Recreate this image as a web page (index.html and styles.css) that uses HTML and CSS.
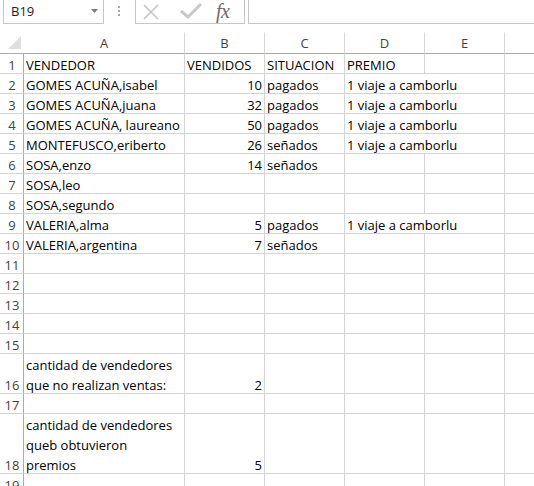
FILE: index.html
```html
<!DOCTYPE html>
<html lang="es">
<head>
<meta charset="utf-8">
<link rel="stylesheet" href="styles.css">
</head>
<body>
<div class="toolbar">
  <div class="namebox">
    <span class="name">B19</span>
    <svg class="arrow" width="7" height="4" viewBox="0 0 7 4"><polygon points="0,0 7,0 3.5,4" fill="#7a7a7a"/></svg>
  </div>
  <div class="dots"><i></i><i></i><i></i></div>
  <div class="fbuttons">
    <svg class="ic-x" width="16" height="16" viewBox="0 0 16 16"><path d="M1 1 L15 15 M15 1 L1 15" stroke="#c4c4c4" stroke-width="1.6" fill="none"/></svg>
    <svg class="ic-ok" width="22" height="16" viewBox="0 0 22 16"><path d="M1 8 L8 14 L21 1" stroke="#c8c8c8" stroke-width="3" fill="none"/></svg>
    <span class="fx">fx</span>
  </div>
  <div class="fbar"></div>
</div>

<div class="sheet">
  <div class="corner"><svg width="13" height="13" viewBox="0 0 13 13"><polygon points="13,0 13,13 0,13" fill="#dfdfdf"/></svg></div>
  <div class="ch">A</div><div class="ch">B</div><div class="ch">C</div><div class="ch">D</div><div class="ch">E</div><div class="ch last"></div>

  <div class="rh">1</div><div class="c">VENDEDOR</div><div class="c">VENDIDOS</div><div class="c">SITUACION</div><div class="c">PREMIO</div><div class="c"></div><div class="c last"></div>
  <div class="rh">2</div><div class="c">GOMES ACUÑA,isabel</div><div class="c n">10</div><div class="c">pagados</div><div class="c ov">1 viaje a camborlu</div><div class="c"></div><div class="c last"></div>
  <div class="rh">3</div><div class="c">GOMES ACUÑA,juana</div><div class="c n">32</div><div class="c">pagados</div><div class="c ov">1 viaje a camborlu</div><div class="c"></div><div class="c last"></div>
  <div class="rh">4</div><div class="c">GOMES ACUÑA, laureano</div><div class="c n">50</div><div class="c">pagados</div><div class="c ov">1 viaje a camborlu</div><div class="c"></div><div class="c last"></div>
  <div class="rh">5</div><div class="c">MONTEFUSCO,eriberto</div><div class="c n">26</div><div class="c">señados</div><div class="c ov">1 viaje a camborlu</div><div class="c"></div><div class="c last"></div>
  <div class="rh">6</div><div class="c">SOSA,enzo</div><div class="c n">14</div><div class="c">señados</div><div class="c"></div><div class="c"></div><div class="c last"></div>
  <div class="rh">7</div><div class="c">SOSA,leo</div><div class="c"></div><div class="c"></div><div class="c"></div><div class="c"></div><div class="c last"></div>
  <div class="rh">8</div><div class="c">SOSA,segundo</div><div class="c"></div><div class="c"></div><div class="c"></div><div class="c"></div><div class="c last"></div>
  <div class="rh">9</div><div class="c">VALERIA,alma</div><div class="c n">5</div><div class="c">pagados</div><div class="c ov">1 viaje a camborlu</div><div class="c"></div><div class="c last"></div>
  <div class="rh">10</div><div class="c">VALERIA,argentina</div><div class="c n">7</div><div class="c">señados</div><div class="c"></div><div class="c"></div><div class="c last"></div>
  <div class="rh">11</div><div class="c"></div><div class="c"></div><div class="c"></div><div class="c"></div><div class="c"></div><div class="c last"></div>
  <div class="rh">12</div><div class="c"></div><div class="c"></div><div class="c"></div><div class="c"></div><div class="c"></div><div class="c last"></div>
  <div class="rh">13</div><div class="c"></div><div class="c"></div><div class="c"></div><div class="c"></div><div class="c"></div><div class="c last"></div>
  <div class="rh">14</div><div class="c"></div><div class="c"></div><div class="c"></div><div class="c"></div><div class="c"></div><div class="c last"></div>
  <div class="rh">15</div><div class="c"></div><div class="c"></div><div class="c"></div><div class="c"></div><div class="c"></div><div class="c last"></div>
  <div class="rh">16</div><div class="c wrap"><div class="lines">cantidad de vendedores<br>que no realizan ventas:</div></div><div class="c n">2</div><div class="c"></div><div class="c"></div><div class="c"></div><div class="c last"></div>
  <div class="rh">17</div><div class="c"></div><div class="c"></div><div class="c"></div><div class="c"></div><div class="c"></div><div class="c last"></div>
  <div class="rh">18</div><div class="c wrap"><div class="lines">cantidad de vendedores<br>queb obtuvieron<br>premios</div></div><div class="c n">5</div><div class="c"></div><div class="c"></div><div class="c"></div><div class="c last"></div>
  <div class="rh">19</div><div class="c"></div><div class="c"></div><div class="c"></div><div class="c"></div><div class="c"></div><div class="c last"></div>
</div>
</body>
</html>
```
FILE: styles.css
```css
html, body {
  margin: 0;
  padding: 0;
  background: #ffffff;
  overflow: hidden;
}
body {
  width: 534px;
  height: 486px;
  font-family: "Open Sans", "Liberation Sans", sans-serif;
  font-size: 13px;
  color: #000;
}

/* ---------- toolbar ---------- */
.toolbar {
  display: flex;
  align-items: flex-start;
  height: 24px;
}
.namebox {
  box-sizing: border-box;
  margin-left: 3px;
  width: 101px;
  height: 24px;
  border: 1px solid #c6c6c6;
  border-top: none;
  display: flex;
  align-items: center;
  justify-content: space-between;
  padding: 0 5px 1px 7px;
  color: #222;
}
.name {
  line-height: 18px;
}
.arrow {
  display: block;
  margin-top: -1px;
}
.dots {
  width: 2px;
  margin: 6px 0 0 14px;
  display: flex;
  flex-direction: column;
  gap: 2px;
}
.dots i {
  display: block;
  width: 2px;
  height: 2px;
  background: #a8a8a8;
}
.fbuttons {
  box-sizing: border-box;
  margin-left: 15px;
  width: 110px;
  height: 24px;
  border: 1px solid #c6c6c6;
  border-top: none;
  display: flex;
  align-items: center;
  padding: 0 0 1px 7px;
}
.ic-x { display: block; margin-top: 1px; flex: none; }
.ic-ok { display: block; margin-left: 21px; flex: none; }
.fx {
  margin-left: 14px;
  font-family: "Liberation Serif", "DejaVu Serif", serif;
  font-style: italic;
  font-size: 20px;
  line-height: 22px;
  height: 22px;
  color: #6a6a6a;
  letter-spacing: -0.5px;
  padding-top: 0;
}
.fbar {
  flex: 1;
  box-sizing: border-box;
  margin-left: 3px;
  height: 24px;
  border-left: 1px solid #c6c6c6;
  border-bottom: 1px solid #c6c6c6;
}

/* ---------- sheet ---------- */
.sheet {
  margin-top: 8px;
  display: grid;
  grid-template-columns: 24px 161px 80px 80px 80px 80px 30px;
  grid-template-rows: 22px repeat(15, 20px) 40px 20px 60px 20px;
}
.sheet > div {
  box-sizing: border-box;
  min-width: 0;
}
.corner {
  border-bottom: 1px solid #ababab;
  display: flex;
  align-items: flex-end;
  justify-content: flex-end;
  padding: 0 3px 4px 0;
}
.corner svg { display: block; }
.ch {
  border-bottom: 1px solid #ababab;
  border-right: 1px solid #d8d8d8;
  border-top: 1px solid #ffffff;
  text-align: center;
  color: #444;
  line-height: 20px;
}
.ch.last { border-right: none; }

/* bottom alignment like Excel: baseline ~3px above gridline */
.rh {
  border-right: 1px solid #ababab;
  border-bottom: 1px solid #d4d4d4;
  color: #444;
  display: flex;
  align-items: flex-end;
  justify-content: center;
  padding-left: 1px;
  line-height: 16px;
}
.c {
  border-right: 1px solid #d4d4d4;
  border-bottom: 1px solid #d4d4d4;
  padding: 0 2px;
  white-space: nowrap;
  display: flex;
  align-items: flex-end;
  line-height: 16px;
}
.c.last { border-right: none; }
.c.n { justify-content: flex-end; }
.c.ov { border-right: none; }
.c.wrap .lines {
  line-height: 20px;
  margin-bottom: -2px;
}
```
